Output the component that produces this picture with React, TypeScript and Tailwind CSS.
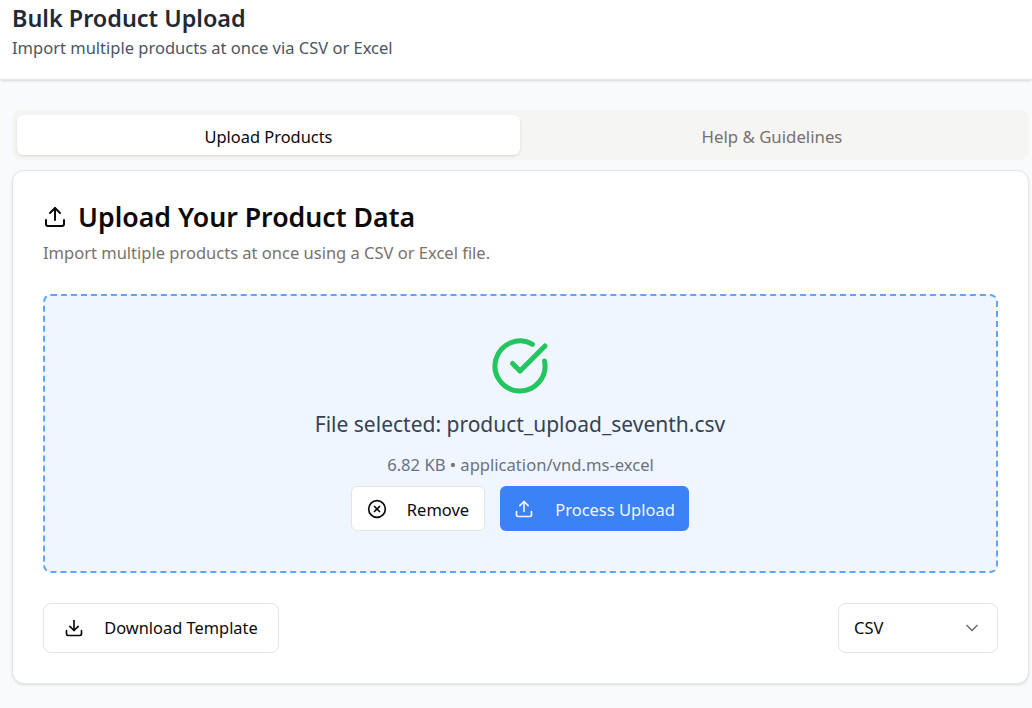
import { CircleCheckBig, CircleX, ChevronDown, Download, Upload } from "lucide-react";

export default function App() {
  return (
    <div className="h-[708px] overflow-hidden bg-[#f9fafb] font-['Noto_Sans',sans-serif]">
      <header className="h-[80px] border-b border-[#e5e7eb] bg-white px-3 shadow-sm">
        <h1 className="pt-[2px] text-[23.4px] font-semibold leading-[32px] text-[#1f2937]">Bulk Product Upload</h1>
        <p className="pt-[2px] text-[16.5px] leading-[24px] text-[#4b5563]">Import multiple products at once via CSV or Excel</p>
      </header>
      <main className="pl-3 pr-[3px] pt-[30px]">
        <div className="flex h-[50px] rounded-lg bg-[#f5f5f4] p-[5px]">
          <div className="flex w-[503px] items-center justify-center rounded-md bg-white pt-[4px] text-[16.4px] text-[#0c0a09] shadow-sm">Upload Products</div>
          <div className="flex flex-1 items-center justify-center pt-[3px] text-[16.8px] text-[#78716c]">{"Help & Guidelines"}</div>
        </div>
        <section className="mt-[10px] h-[514px] rounded-xl border border-[#e5e7eb] bg-white px-[30px] pt-[28px] shadow-sm">
          <div className="flex items-center gap-[11px]">
            <Upload className="h-6 w-6 text-[#0c0a09]" strokeWidth={2} />
            <h2 className="text-[26.7px] font-semibold leading-[36px] text-[#0c0a09]">Upload Your Product Data</h2>
          </div>
          <p className="mt-[6px] text-[16.5px] leading-[24px] text-[#78716c]">Import multiple products at once using a CSV or Excel file.</p>
          <div className="mt-[29px] flex h-[279px] flex-col items-center rounded-lg border-2 border-dashed border-[#60a5fa] bg-[#eff6ff] pr-px pt-[40px]">
            <CircleCheckBig className="h-[60px] w-[60px] text-[#22c55e]" strokeWidth={2} />
            <p className="mt-[14px] text-[21px] leading-[28px] text-[#374151]">File selected: product_upload_seventh.csv</p>
            <p className="mt-[15px] pl-px text-[16.6px] leading-[24px] text-[#6b7280]">6.82 KB • application/vnd.ms-excel</p>
            <div className="mt-[9px] flex gap-[15px]">
              <button className="flex h-[45px] w-[134px] items-center justify-center gap-[20px] rounded-md border border-[#e7e5e4] bg-white text-[16.5px] text-[#0c0a09]">
                <CircleX className="h-5 w-5" />
                <span className="pt-[3px]">Remove</span>
              </button>
              <button className="flex h-[45px] w-[189px] items-center justify-center gap-[21px] rounded-md bg-[#3b82f6] text-[16.5px] text-[#eff6ff]">
                <Upload className="h-5 w-5" />
                <span className="pt-[3px]">Process Upload</span>
              </button>
            </div>
          </div>
          <div className="mt-[30px] flex items-center justify-between">
            <button className="flex h-[50px] w-[236px] items-center justify-center gap-[20px] rounded-lg border border-[#e7e5e4] bg-white text-[16.4px] text-[#0c0a09]">
              <Download className="h-5 w-5" />
              Download Template
            </button>
            <div className="flex h-[50px] w-[160px] items-center justify-between rounded-lg border border-[#e7e5e4] bg-white px-[15px] text-[16.5px] text-[#0c0a09]">
              CSV
              <ChevronDown className="h-5 w-5 text-[#78716c]" />
            </div>
          </div>
        </section>
      </main>
    </div>
  );
}
